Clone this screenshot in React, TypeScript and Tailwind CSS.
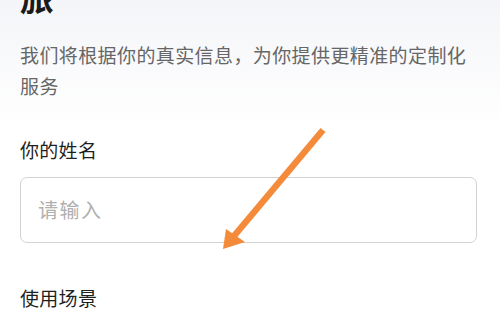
import React from "react";

export default function App() {
  const font = { fontFamily: '"Noto Sans CJK SC", "Noto Sans", sans-serif' };
  return (
    <div
      className="relative w-[500px] h-[319px] overflow-hidden bg-gradient-to-b from-[#f4f5f8] to-white to-[40%]"
      style={font}
    >
      <div className="flex flex-col px-5">
        <div className="mt-[-23px] text-[34px] leading-[40px] font-bold text-[#1a1a1a]">旅</div>
        <p className="mt-[22px] text-[19px] leading-[31px] tracking-[0.4px] text-[#666]">
          我们将根据你的真实信息，为你提供更精准的定制化服务
        </p>
        <div className="mt-[37px] text-[19px] leading-[24px] tracking-[0.3px] text-[#1f1f1f]">你的姓名</div>
        <div className="mt-[15px] h-[66px] w-[457px] rounded-[7px] border border-[#d2d2d2] bg-white flex items-center pl-[17px]">
          <span className="text-[20px] tracking-[1.5px] text-[#b0b0b0]">请输入</span>
        </div>
        <div className="mt-[43px] text-[19px] leading-[24px] tracking-[0.3px] text-[#1f1f1f]">使用场景</div>
      </div>
      <svg className="absolute left-0 top-0 pointer-events-none" width="500" height="319" viewBox="0 0 500 319">
        <line x1="323" y1="130" x2="234" y2="236" stroke="#f48b3b" strokeWidth="6.5" strokeLinecap="butt" />
        <polygon points="223,249 226,229 245,242" fill="#f48b3b" />
      </svg>
    </div>
  );
}
